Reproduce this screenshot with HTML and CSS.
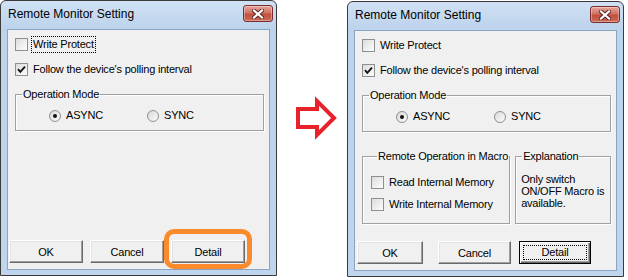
FILE: index.html
```html
<!DOCTYPE html>
<html lang="en">
<head>
    <meta charset="UTF-8">
    <meta name="viewport" content="width=device-width, initial-scale=1.0">
    <title>Remote Monitor Setting</title>
    <link rel="stylesheet" href="styles.css">
</head>
<body>

    <div class="stage">
        <!-- Before: compact dialog -->
        <div class="window">
            <div class="titlebar">
                <span class="title">Remote Monitor Setting</span>
                <button class="close" aria-label="Close">
                    <svg width="12" height="10" viewBox="0 0 12 10">
                        <path d="M2 1.5 L10 8.5 M10 1.5 L2 8.5" stroke="#5a2020" stroke-width="4" stroke-linecap="square"/>
                        <path d="M2 1.5 L10 8.5 M10 1.5 L2 8.5" stroke="#fff" stroke-width="2.2" stroke-linecap="square"/>
                    </svg>
                </button>
            </div>
            <div class="client">
                <label class="check">
                    <span class="box"></span>
                    <span class="text focus">Write Protect</span>
                </label>
                <label class="check">
                    <span class="box"><svg width="11" height="11" viewBox="0 0 11 11"><path d="M2 5.2 L4.3 7.8 L9 2.6" fill="none" stroke="#111" stroke-width="1.8"/></svg></span>
                    <span class="text">Follow the device's polling interval</span>
                </label>

                <fieldset class="group mode">
                    <legend>Operation Mode</legend>
                    <div class="radios">
                        <label class="radio"><span class="dot on"></span><span class="text">ASYNC</span></label>
                        <label class="radio"><span class="dot"></span><span class="text">SYNC</span></label>
                    </div>
                </fieldset>

                <div class="buttons">
                    <button class="btn">OK</button>
                    <button class="btn">Cancel</button>
                    <button class="btn marked">Detail</button>
                </div>
            </div>
        </div>

        <!-- Arrow between the two states -->
        <div class="arrow">
            <svg width="46" height="46" viewBox="0 0 46 46">
                <path d="M4 13 L23 13 L23 5 L40 22 L23 39 L23 31 L4 31 Z" fill="none" stroke="#e8212b" stroke-width="4"/>
            </svg>
        </div>

        <!-- After: expanded dialog -->
        <div class="window after">
            <div class="titlebar">
                <span class="title">Remote Monitor Setting</span>
                <button class="close" aria-label="Close">
                    <svg width="12" height="10" viewBox="0 0 12 10">
                        <path d="M2 1.5 L10 8.5 M10 1.5 L2 8.5" stroke="#5a2020" stroke-width="4" stroke-linecap="square"/>
                        <path d="M2 1.5 L10 8.5 M10 1.5 L2 8.5" stroke="#fff" stroke-width="2.2" stroke-linecap="square"/>
                    </svg>
                </button>
            </div>
            <div class="client">
                <label class="check">
                    <span class="box"></span>
                    <span class="text">Write Protect</span>
                </label>
                <label class="check">
                    <span class="box"><svg width="11" height="11" viewBox="0 0 11 11"><path d="M2 5.2 L4.3 7.8 L9 2.6" fill="none" stroke="#111" stroke-width="1.8"/></svg></span>
                    <span class="text">Follow the device's polling interval</span>
                </label>

                <fieldset class="group mode">
                    <legend>Operation Mode</legend>
                    <div class="radios">
                        <label class="radio"><span class="dot on"></span><span class="text">ASYNC</span></label>
                        <label class="radio"><span class="dot"></span><span class="text">SYNC</span></label>
                    </div>
                </fieldset>

                <div class="macro-row">
                    <fieldset class="group macro">
                        <legend>Remote Operation in Macro</legend>
                        <label class="check">
                            <span class="box"></span>
                            <span class="text">Read Internal Memory</span>
                        </label>
                        <label class="check">
                            <span class="box"></span>
                            <span class="text">Write Internal Memory</span>
                        </label>
                    </fieldset>
                    <fieldset class="group explain">
                        <legend>Explanation</legend>
                        <p>Only switch<br>ON/OFF Macro is<br>available.</p>
                    </fieldset>
                </div>

                <div class="buttons">
                    <button class="btn ok">OK</button>
                    <button class="btn cancel">Cancel</button>
                    <button class="btn default"><span class="focus">Detail</span></button>
                </div>
            </div>
        </div>
    </div>

</body>
</html>
```

FILE: styles.css
```css
* {
    box-sizing: border-box;
}
body {
    margin: 0;
    background-color: #fff;
    font-family: "Liberation Sans", Arial, sans-serif;
    font-size: 11px;
    letter-spacing: -0.2px;
    color: #000;
}
.stage {
    display: flex;
    align-items: flex-start;
}

/* window frame */
.window {
    width: 277px;
    height: 276px;
    display: flex;
    flex-direction: column;
    padding: 0 6px 5px;
    border: 1px solid #3a3a3a;
    border-radius: 6px 6px 0 0;
    background: linear-gradient(#d0e1f4, #bcd3ec 28px, #bfd5ed);
}
.window.after {
    margin-top: 1px;
}
.titlebar {
    height: 28px;
    margin-right: -3px;
    display: flex;
    justify-content: space-between;
    align-items: flex-start;
}
.title {
    font-size: 12px;
    letter-spacing: 0;
    margin: 6px 0 0 1px;
}
.close {
    width: 30px;
    height: 17px;
    margin-top: 4px;
    padding: 0;
    display: flex;
    align-items: center;
    justify-content: center;
    border: 1px solid #7a2d2d;
    border-radius: 3px;
    background: linear-gradient(#e5a89d, #d07262 45%, #c0503f 55%, #cc6a56);
    box-shadow: inset 0 0 0 1px rgba(255, 255, 255, 0.35);
}
.client {
    flex: 1;
    display: flex;
    flex-direction: column;
    padding-top: 8px;
    background-color: #f0f0f0;
    border: 1px solid #8aa5c4;
}

/* checkboxes */
.check {
    display: flex;
    align-items: center;
    gap: 3px;
    margin-left: 7px;
    height: 13px;
}
.check + .check {
    margin-top: 12px;
}
.box {
    width: 13px;
    height: 13px;
    display: flex;
    align-items: center;
    justify-content: center;
    border: 1px solid #8e8f8f;
    background: linear-gradient(135deg, #dcdcdc, #fdfdfd);
}
.text {
    padding: 1px;
    border: 1px dotted transparent;
    line-height: 13px;
    white-space: nowrap;
}
.focus {
    border-color: #000;
}

/* group boxes */
.group {
    margin: 12px 5px 0 7px;
    padding: 0;
    border: 1px solid #a0a0a0;
    box-shadow: inset 1px 1px #fff, 1px 1px #fff;
}
.group legend {
    margin-left: 6px;
    padding: 0 1px;
    line-height: 13px;
    white-space: nowrap;
}
.radios {
    display: flex;
    margin: 6px 0 6px 33px;
}
.radio {
    display: flex;
    align-items: center;
    gap: 3px;
    width: 98px;
}
.dot {
    width: 12px;
    height: 12px;
    display: flex;
    align-items: center;
    justify-content: center;
    border: 1px solid #8e8f8f;
    border-radius: 50%;
    background: linear-gradient(135deg, #d8d8d8, #fdfdfd);
}
.dot.on::after {
    content: "";
    width: 4px;
    height: 4px;
    border-radius: 50%;
    background-color: #111;
}

.macro-row {
    display: flex;
    gap: 5px;
    margin: 18px 5px 0 7px;
}
.macro-row .group {
    margin: 0;
}
.macro {
    width: 144px;
    padding: 13px 0 12px 8px;
}
.macro .check {
    margin-left: 0;
}
.macro .check + .check {
    margin-top: 9px;
}
.explain {
    flex: 1;
}
.explain p {
    margin: 10px 0 0 5px;
    line-height: 12px;
    white-space: nowrap;
}

/* push buttons */
.buttons {
    margin-top: auto;
    padding: 0 0 6px 1px;
    display: flex;
    gap: 7px;
}
.after .buttons {
    padding-left: 2px;
    gap: 8px;
}
.btn {
    position: relative;
    width: 74px;
    height: 23px;
    padding: 0;
    font-family: inherit;
    font-size: 11px;
    letter-spacing: inherit;
    color: #000;
    background-color: #f0f0f0;
    border: 1px solid;
    border-color: #fff #696969 #696969 #fff;
    box-shadow: inset -1px -1px #a0a0a0, inset 1px 1px #e3e3e3;
}
.btn.ok {
    width: 66px;
    margin-right: 7px;
}
.btn.cancel {
    width: 73px;
}
.btn.default {
    width: 72px;
    border: 1px solid #000;
    box-shadow: inset 1px 1px #fff, inset -1px -1px #696969, inset -2px -2px #a0a0a0;
}
.btn.default .focus {
    display: block;
    margin: 3px;
    line-height: 13px;
    border: 1px dotted #000;
}

/* orange annotation ring */
.btn.marked::after {
    content: "";
    position: absolute;
    top: -12px;
    left: -8px;
    right: -8px;
    bottom: -7px;
    border: 5px solid #fb8a2c;
    border-radius: 10px;
}

.arrow {
    width: 70px;
    padding: 96px 0 0 17px;
}
```
